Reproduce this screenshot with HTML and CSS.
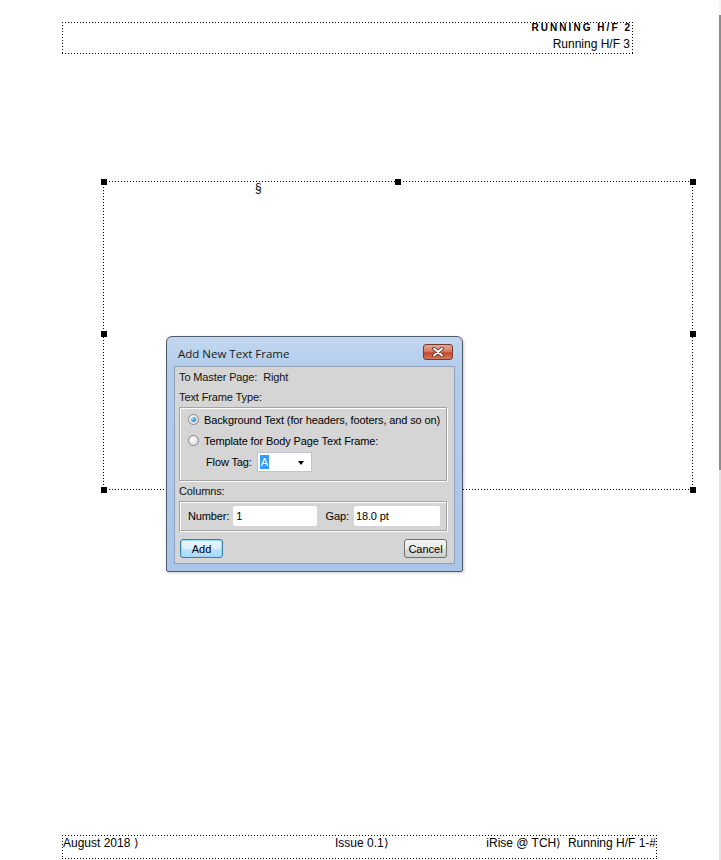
FILE: index.html
```html
<!DOCTYPE html>
<html lang="en">
<head>
    <meta charset="UTF-8">
    <title>Add New Text Frame</title>
    <link rel="stylesheet" href="styles.css">
</head>
<body>
    <div class="page">
        <!-- Running header frame -->
        <div class="dotted header-frame">
            <div class="hf-caps">RUNNING H/F 2</div>
            <div class="hf-line">Running H/F 3</div>
        </div>

        <!-- Text frame being placed -->
        <div class="dotted text-frame">
            <span class="para-mark">§</span>
            <span class="handle h-tl"></span>
            <span class="handle h-tc"></span>
            <span class="handle h-tr"></span>
            <span class="handle h-ml"></span>
            <span class="handle h-mr"></span>
            <span class="handle h-bl"></span>
            <span class="handle h-bc"></span>
            <span class="handle h-br"></span>
        </div>

        <!-- Running footer frame -->
        <div class="dotted footer-frame">
            <span class="ft-left">August 2018 ⟩</span>
            <span class="ft-mid">Issue 0.1⟩</span>
            <span class="ft-right">iRise @ TCH⟩ &nbsp;Running H/F 1-#</span>
        </div>

        <div class="scroll-edge"></div>

        <!-- Dialog -->
        <div class="dialog">
            <div class="titlebar">
                <span class="title">Add New Text Frame</span>
                <span class="close-btn">
                    <svg width="14" height="10" viewBox="0 0 14 10">
                        <path d="M3 1.5 L11 8.5 M11 1.5 L3 8.5" stroke="#4a2a22" stroke-width="3.6" stroke-linecap="round"/>
                        <path d="M3 1.5 L11 8.5 M11 1.5 L3 8.5" stroke="#ffffff" stroke-width="2" stroke-linecap="round"/>
                    </svg>
                </span>
            </div>
            <div class="dlg-body">
                <div class="row">To Master Page:&nbsp; Right</div>
                <div class="row">Text Frame Type:</div>
                <div class="group type-group">
                    <label class="radio-row">
                        <span class="radio checked"></span>
                        Background Text (for headers, footers, and so on)
                    </label>
                    <label class="radio-row">
                        <span class="radio"></span>
                        Template for Body Page Text Frame:
                    </label>
                    <div class="flow-row">
                        <span>Flow Tag:</span>
                        <span class="combo">
                            <span class="sel">A</span>
                            <span class="arrow"></span>
                        </span>
                    </div>
                </div>
                <div class="row">Columns:</div>
                <div class="group cols-group">
                    <span>Number:</span>
                    <span class="field num-field">1</span>
                    <span class="gap-label">Gap:</span>
                    <span class="field gap-field">18.0 pt</span>
                </div>
                <div class="buttons">
                    <button class="btn default">Add</button>
                    <button class="btn">Cancel</button>
                </div>
            </div>
        </div>
    </div>
</body>
</html>
```

FILE: styles.css
```css
/* Page canvas */
body {
    margin: 0;
    background: #ffffff;
    font-family: "Liberation Sans", Arial, sans-serif;
    color: #000;
}

.page {
    position: relative;
    width: 721px;
    height: 860px;
    overflow: hidden;
}

/* Dotted frame outlines, 1px dot every 3px */
.dotted {
    position: absolute;
    box-sizing: border-box;
    background-image:
        repeating-linear-gradient(to right, #000 0 1px, transparent 1px 3px),
        repeating-linear-gradient(to right, #000 0 1px, transparent 1px 3px),
        repeating-linear-gradient(to bottom, #000 0 1px, transparent 1px 3px),
        repeating-linear-gradient(to bottom, #000 0 1px, transparent 1px 3px);
    background-size: 100% 1px, 100% 1px, 1px 100%, 1px 100%;
    background-position: left top, left bottom, left top, right top;
    background-repeat: no-repeat;
}

.header-frame {
    left: 62px;
    top: 22px;
    width: 571px;
    height: 32px;
    padding: 0 3px 0 0;
    text-align: right;
}

.hf-caps {
    font-size: 10px;
    font-weight: bold;
    letter-spacing: 2.05px;
    margin-right: -2.05px;
    line-height: 12px;
    margin-top: 0;
}

.hf-line {
    font-size: 12px;
    line-height: 14px;
    margin-top: 3px;
}

.text-frame {
    left: 103px;
    top: 181px;
    width: 590px;
    height: 309px;
}

.para-mark {
    position: absolute;
    left: 152px;
    top: 0;
    font-size: 12px;
    line-height: 14px;
}

.handle {
    position: absolute;
    width: 6px;
    height: 6px;
    background: #000;
    margin: -3px 0 0 -3px;
}

.h-tl { left: 0.5px; top: 0.5px; }
.h-tc { left: 294.5px; top: 0.5px; }
.h-tr { left: 589.5px; top: 0.5px; }
.h-ml { left: 0.5px; top: 152.5px; }
.h-mr { left: 589.5px; top: 152.5px; }
.h-bl { left: 0.5px; top: 308.5px; }
.h-bc { left: 294.5px; top: 308.5px; }
.h-br { left: 589.5px; top: 308.5px; }

.footer-frame {
    left: 62px;
    top: 835px;
    width: 595px;
    height: 24px;
    font-size: 12px;
    line-height: 14px;
    display: flex;
    padding: 1px 1px 0 1px;
}

.ft-left {
    flex: 0 0 272px;
}

.ft-right {
    margin-left: auto;
}

.scroll-edge {
    position: absolute;
    right: 0;
    top: 0;
    width: 2px;
    height: 860px;
    background: linear-gradient(to bottom, #f4f4f4 0 15px, #8c8c8c 15px 470px, #e2e2e2 470px);
}

/* Dialog window */
.dialog {
    position: absolute;
    left: 166px;
    top: 336px;
    width: 297px;
    height: 236px;
    box-sizing: border-box;
    border: 1px solid #4c5a6a;
    border-radius: 6px 6px 2px 2px;
    background: linear-gradient(to bottom, #c3d8ef 0, #b3cdeb 30px, #a9c5e8 100%);
    padding: 0 7px 7px 7px;
    display: flex;
    flex-direction: column;
    font-family: "Liberation Sans", Arial, sans-serif;
    font-size: 11px;
    letter-spacing: -0.12px;
    box-shadow: 1px 1px 3px rgba(0, 0, 0, 0.2);
}

.titlebar {
    height: 29px;
    display: flex;
    align-items: center;
    justify-content: space-between;
    padding: 0 2px 0 4px;
}

.title {
    font-family: "Open Sans", "Liberation Sans", sans-serif;
    font-size: 11.5px;
    letter-spacing: 0;
    color: #1a1a1a;
    margin-top: 4px;
}

.close-btn {
    width: 30px;
    height: 16px;
    box-sizing: border-box;
    border: 1px solid #6d3b2f;
    border-radius: 3px;
    background: linear-gradient(to bottom, #e6a899 0, #d77c66 45%, #c44a2e 55%, #d7765a 100%);
    display: flex;
    align-items: center;
    justify-content: center;
    margin-top: 1px;
}

.dlg-body {
    flex: 1;
    background: #d5d5d5;
    border: 1px solid #8ca1bd;
    padding: 0 6px 0 4px;
    display: flex;
    flex-direction: column;
}

.row {
    height: 20px;
    line-height: 20px;
    color: #111;
}

.group {
    border: 1px solid #a3a3a3;
    box-shadow: inset 1px 1px 0 #ffffff, 1px 1px 0 #ffffff;
    margin-right: 1px;
}

.type-group {
    height: 74px;
    box-sizing: border-box;
    padding: 1px 0 0 8px;
}

.radio-row {
    display: flex;
    align-items: center;
    gap: 5px;
    height: 21px;
}

.radio {
    width: 11px;
    height: 11px;
    box-sizing: border-box;
    border-radius: 50%;
    border: 1px solid #8a8a8a;
    background: radial-gradient(circle at 40% 40%, #ffffff 0, #e3e3e3 60%, #cfcfcf 100%);
    position: relative;
}

.radio.checked::after {
    content: "";
    position: absolute;
    left: 2px;
    top: 2px;
    width: 5px;
    height: 5px;
    border-radius: 50%;
    background: radial-gradient(circle at 35% 35%, #a9e1ff 0, #2b8ed8 60%, #1a5e9a 100%);
}

.flow-row {
    display: flex;
    align-items: center;
    gap: 5px;
    padding-left: 18px;
    height: 22px;
}

.combo {
    width: 55px;
    height: 20px;
    box-sizing: border-box;
    background: #fff;
    border: 1px solid #b8c6d8;
    display: flex;
    align-items: center;
    padding-left: 2px;
    position: relative;
}

.sel {
    background: #3399ff;
    color: #fff;
    padding: 0 1px;
    line-height: 14px;
}

.arrow {
    position: absolute;
    right: 7px;
    top: 8px;
    border-left: 3.5px solid transparent;
    border-right: 3.5px solid transparent;
    border-top: 4px solid #000;
}

.cols-group {
    height: 30px;
    box-sizing: border-box;
    display: flex;
    align-items: center;
    padding: 0 6px 0 8px;
}

.field {
    background: #fff;
    height: 20px;
    line-height: 20px;
    box-sizing: border-box;
    padding-left: 3px;
    border-radius: 2px;
}

.num-field {
    width: 86px;
    margin-left: 4px;
}

.gap-label {
    margin-left: 9px;
}

.gap-field {
    width: 89px;
    margin-left: 5px;
    padding-left: 2px;
}

.buttons {
    display: flex;
    justify-content: space-between;
    margin-top: 8px;
    padding-right: 1px;
}

.btn {
    font-family: "Liberation Sans", Arial, sans-serif;
    font-size: 11px;
    height: 19px;
    width: 43px;
    padding: 0;
    border: 1px solid #707070;
    border-radius: 3px;
    background: linear-gradient(to bottom, #f2f2f2 0, #ebebeb 50%, #dddddd 51%, #cfcfcf 100%);
    color: #000;
}

.btn.default {
    border-color: #3c7fb1;
    box-shadow: inset 0 0 0 1px #9fd6f5;
    background: linear-gradient(to bottom, #eaf6fd 0, #d9f0fc 50%, #bee6fd 51%, #a7d9f5 100%);
    margin-left: 1px;
}
```
